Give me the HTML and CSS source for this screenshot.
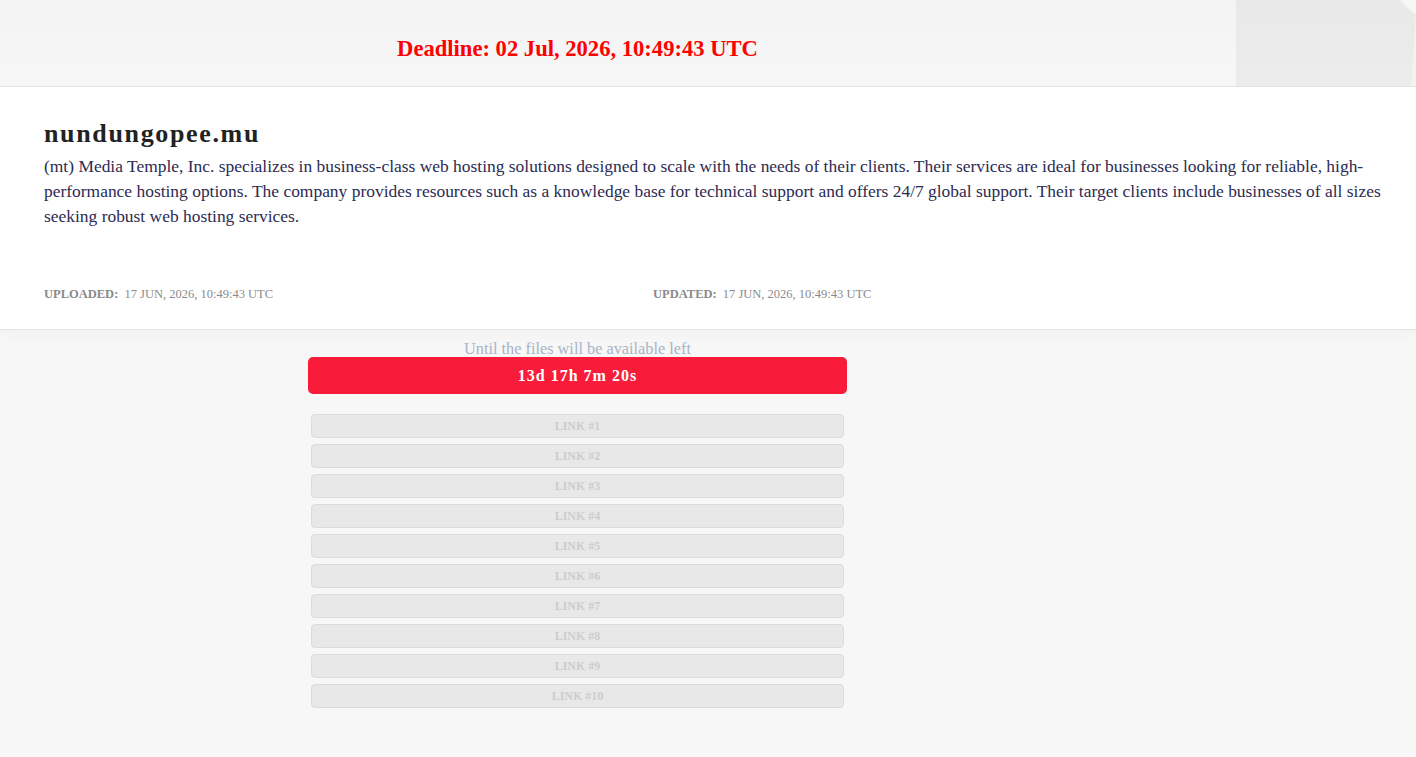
FILE: index.html
```html
<!DOCTYPE html>
<html lang="en">
<head>
<meta charset="utf-8">
<title>nundungopee.mu</title>
<link rel="stylesheet" href="styles.css">
</head>
<body>
<header class="topbar">
  <div class="topbar-main">
    <h2 class="deadline">Deadline: 02 Jul, 2026, 10:49:43 UTC</h2>
  </div>
  <svg class="topbar-deco" width="180" height="86" viewBox="0 0 180 86" aria-hidden="true">
    <defs>
      <linearGradient id="deco" x1="0" y1="0" x2="0" y2="1">
        <stop offset="0" stop-color="#e9e9e9"/>
        <stop offset="1" stop-color="#ececec"/>
      </linearGradient>
    </defs>
    <rect x="0" y="0" width="180" height="86" fill="url(#deco)"/>
    <path d="M164 0 Q170 8 180 14 L180 0 Z" fill="#f6f6f6"/>
    <path d="M180 14 L175 86 L180 86 Z" fill="#f3f3f3"/>
  </svg>
</header>

<section class="card">
  <h1 class="site-name">nundungopee.mu</h1>
  <p class="site-desc">(mt) Media Temple, Inc. specializes in business-class web hosting solutions designed to scale with the needs of their clients. Their services are ideal for businesses looking for reliable, high-performance hosting options. The company provides resources such as a knowledge base for technical support and offers 24/7 global support. Their target clients include businesses of all sizes seeking robust web hosting services.</p>
  <div class="meta">
    <div class="meta-item"><span class="meta-label">Uploaded:</span> 17 Jun, 2026, 10:49:43 UTC</div>
    <div class="meta-item"><span class="meta-label">Updated:</span> 17 Jun, 2026, 10:49:43 UTC</div>
  </div>
</section>

<main class="downloads">
  <div class="downloads-col">
    <p class="timer-caption">Until the files will be available left</p>
    <div class="timer">13d 17h 7m 20s</div>
    <ul class="links">
      <li class="link">LINK #1</li>
      <li class="link">LINK #2</li>
      <li class="link">LINK #3</li>
      <li class="link">LINK #4</li>
      <li class="link">LINK #5</li>
      <li class="link">LINK #6</li>
      <li class="link">LINK #7</li>
      <li class="link">LINK #8</li>
      <li class="link">LINK #9</li>
      <li class="link">LINK #10</li>
    </ul>
  </div>
</main>
</body>
</html>
```

FILE: styles.css
```css
html, body {
  margin: 0;
  padding: 0;
}

body {
  font-family: "Liberation Serif", "Times New Roman", serif;
  background: #f7f7f7;
  min-height: 757px;
}

/* top bar with the deadline */
.topbar {
  position: relative;
  height: 86px;
  background: linear-gradient(to bottom, #f3f3f3 0%, #f7f7f7 100%);
  border-bottom: 1px solid #e3e3e3;
  display: flex;
}

.topbar-main {
  width: 1155px;
  display: flex;
  justify-content: center;
  align-items: center;
  padding-top: 12px;
}

.deadline {
  margin: 0;
  color: #ff0000;
  font-size: 22.6px;
  font-weight: bold;
  line-height: 1;
}

.topbar-deco {
  position: absolute;
  right: 0;
  top: 0;
}

/* description card */
.card {
  background: #ffffff;
  border-bottom: 1px solid #e4e4e4;
  padding: 32px 20px 27px 44px;
  box-shadow: 0 6px 14px rgba(0, 0, 0, 0.025);
}

.site-name {
  margin: 0;
  font-size: 26px;
  line-height: 30px;
  letter-spacing: 1.65px;
  color: #222222;
  font-weight: bold;
}

.site-desc {
  margin: 5px 0 0 0;
  font-size: 17.45px;
  line-height: 25px;
  color: #2d2b52;
}

.meta {
  display: grid;
  grid-template-columns: 609px 1fr;
  margin-top: 57px;
  font-size: 12.5px;
  line-height: 16px;
  color: #8a8a8a;
  text-transform: uppercase;
}

.meta-label {
  font-weight: bold;
  margin-right: 3px;
}

/* download area */
.downloads {
  display: flex;
}

.downloads-col {
  width: 1155px;
  display: flex;
  flex-direction: column;
  align-items: center;
}

.timer-caption {
  margin: 10px 0 0 0;
  font-size: 16.3px;
  line-height: 17px;
  color: #a9b3c6;
}

.timer {
  width: 539px;
  height: 37px;
  box-sizing: border-box;
  background: #f91b3a;
  border-radius: 5px;
  color: #ffffff;
  font-weight: bold;
  font-size: 16px;
  letter-spacing: 1px;
  display: flex;
  align-items: center;
  justify-content: center;
}

.links {
  list-style: none;
  margin: 20px 0 0 0;
  padding: 0;
  display: flex;
  flex-direction: column;
  gap: 6px;
}

.link {
  width: 533px;
  height: 24px;
  box-sizing: border-box;
  background: #e8e8e8;
  border: 1px solid #dcdcdc;
  border-radius: 4px;
  color: #cdcdcd;
  font-weight: bold;
  font-size: 12px;
  display: flex;
  align-items: center;
  justify-content: center;
}
```
